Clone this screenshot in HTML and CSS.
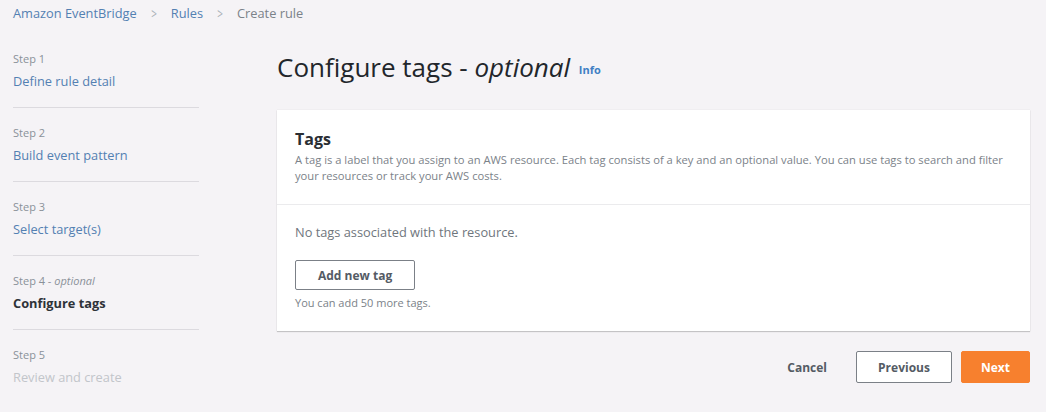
FILE: index.html
```html
<!DOCTYPE html>
<html>
<head>
<meta charset="utf-8">
<link rel="stylesheet" href="styles.css">
</head>
<body>
<div class="page">
  <nav class="crumbs">
    <span class="crumb-link">Amazon EventBridge</span>
    <span class="sep">&gt;</span>
    <span class="crumb-link">Rules</span>
    <span class="sep">&gt;</span>
    <span class="crumb-current">Create rule</span>
  </nav>
  <div class="layout">
    <ol class="steps">
      <li class="step">
        <div class="step-num">Step 1</div>
        <div class="step-label link">Define rule detail</div>
      </li>
      <li class="step">
        <div class="step-num">Step 2</div>
        <div class="step-label link">Build event pattern</div>
      </li>
      <li class="step">
        <div class="step-num">Step 3</div>
        <div class="step-label link">Select target(s)</div>
      </li>
      <li class="step">
        <div class="step-num">Step 4 - <i>optional</i></div>
        <div class="step-label current">Configure tags</div>
      </li>
      <li class="step">
        <div class="step-num">Step 5</div>
        <div class="step-label disabled">Review and create</div>
      </li>
    </ol>
    <main class="main">
      <h1 class="title">Configure tags - <i>optional</i> <span class="info">Info</span></h1>
      <section class="card">
        <div class="card-head">
          <h2 class="card-title">Tags</h2>
          <p class="card-desc">A tag is a label that you assign to an AWS resource. Each tag consists of a key and an optional value. You can use tags to search and filter your resources or track your AWS costs.</p>
        </div>
        <div class="card-body">
          <p class="empty">No tags associated with the resource.</p>
          <button class="btn">Add new tag</button>
          <p class="hint">You can add 50 more tags.</p>
        </div>
      </section>
      <div class="actions">
        <button class="btn-link">Cancel</button>
        <button class="btn btn-wide">Previous</button>
        <button class="btn btn-primary">Next</button>
      </div>
    </main>
  </div>
</div>
</body>
</html>
```
FILE: styles.css
```css
* { box-sizing: border-box; }
html, body { margin: 0; padding: 0; }
body {
  background: #f5f3f6;
  font-family: "Open Sans", "Noto Sans", sans-serif;
  color: #2a2e33;
  width: 1046px;
  height: 412px;
  overflow: hidden;
}
.page { padding: 4px 16px 0 13px; }
.crumbs {
  display: flex;
  align-items: center;
  gap: 13px;
  font-size: 12.8px;
  height: 18px;
}
.crumb-link { color: #5380b2; }
.sep { color: #a9b0b7; font-size: 14px; transform: scaleX(0.7); }
.crumb-current { color: #7b8289; }
.layout {
  display: flex;
  margin-top: 28px;
}
.steps {
  list-style: none;
  margin: 0;
  padding: 0;
  width: 186px;
}
.step {
  border-bottom: 1px solid #dcdadf;
  padding-top: 16px;
  height: 74px;
}
.step:first-child { padding-top: 0; height: 58px; }
.step:last-child { border-bottom: 0; }
.step-num { font-size: 11px; color: #8a9199; line-height: 18px; }
.step-num i { font-style: italic; }
.step-label { font-size: 12.8px; line-height: 22px; margin-top: 2px; }
.link { color: #5380b2; }
.current { color: #2e3238; font-weight: 700; }
.disabled { color: #c2c5ca; }
.main {
  flex: 1;
  margin-left: 78px;
}
.title {
  font-size: 26px;
  font-weight: 400;
  margin: 0;
  line-height: 34px;
  color: #22262b;
}
.title i { font-style: italic; }
.info { font-size: 11px; font-weight: 700; color: #3f7fc4; vertical-align: 3px; margin-left: 2px; }
.card {
  margin-top: 23px;
  background: #fff;
  box-shadow: 0 1px 1px rgba(0,0,0,0.18), 0 0 1px rgba(0,0,0,0.12);
}
.card-head {
  padding: 18px 18px 20px;
  border-bottom: 1px solid #ebebed;
}
.card-title { font-size: 16px; font-weight: 700; margin: 0; line-height: 22px; color: #2a2e33; }
.card-desc { font-size: 11.2px; line-height: 16px; color: #7b8289; margin: 2px 0 0; }
.card-body { padding: 17px 18px 20px; }
.empty { margin: 0; font-size: 12.8px; color: #6f767d; line-height: 20px; }
.btn {
  font-family: inherit;
  background: #fff;
  border: 1px solid #7b8087;
  border-radius: 2px;
  font-size: 12px;
  font-weight: 700;
  color: #545b64;
  height: 30px;
  padding: 0 22px;
  cursor: pointer;
}
.card-body .btn { margin-top: 18px; }
.hint { margin: 5px 0 0; font-size: 11px; color: #7b8289; line-height: 16px; }
.actions {
  display: flex;
  justify-content: flex-end;
  align-items: center;
  margin-top: 20px;
  gap: 9px;
}
.btn-link {
  font-family: inherit;
  background: none;
  border: 0;
  font-size: 12px;
  font-weight: 700;
  color: #545b64;
  padding: 0 20px;
  height: 32px;
}
.btn-wide { height: 32px; width: 96px; padding: 0; }
.btn-primary {
  height: 32px;
  width: 69px;
  padding: 0;
  background: #f7802e;
  border-color: #f7802e;
  color: #fff;
}
```
